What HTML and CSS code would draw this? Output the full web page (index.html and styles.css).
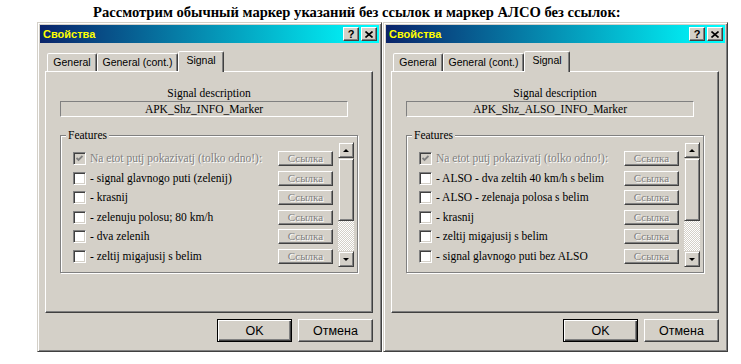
FILE: index.html
```html
<!DOCTYPE html>
<html lang="ru">
<head>
    <meta charset="UTF-8">
    <meta name="viewport" content="width=device-width, initial-scale=1.0">
    <title>Свойства</title>
    <link rel="stylesheet" href="styles.css">
</head>
<body>

<h2 class="heading">Рассмотрим обычный маркер указаний без ссылок и маркер АЛСО без ссылок:</h2>

<div class="dialogs">

    <!-- first dialog: APK_Shz_INFO_Marker -->
    <div class="dialog">
        <div class="titlebar">
            <span class="title">Свойства</span>
            <span class="tbtn help">?</span>
            <span class="tbtn close"><svg width="8" height="7" viewBox="0 0 8 7"><path d="M0.5 0.5l7 6M7.5 0.5l-7 6" stroke="#000" stroke-width="1.6"/></svg></span>
        </div>
        <div class="body">
            <div class="tabs">
                <div class="tab tab-general">General</div>
                <div class="tab tab-cont">General (cont.)</div>
                <div class="tab tab-signal active">Signal</div>
            </div>
            <div class="panel">
                <div class="desc-label">Signal description</div>
                <div class="desc">APK_Shz_INFO_Marker</div>
                <div class="group">
                    <div class="group-title">Features</div>
                    <div class="group-body">
                        <div class="rows">
                            <div class="row disabled">
                                <span class="check checked"><svg width="7" height="7" viewBox="0 0 7 7"><path d="M0.5 3l2 2 4-4" stroke="#808080" stroke-width="1.8" fill="none"/></svg></span>
                                <span class="label">Na etot putj pokazivatj (tolko odno!):</span>
                                <span class="link">Ссылка</span>
                            </div>
                            <div class="row">
                                <span class="check"></span>
                                <span class="label">- signal glavnogo puti (zelenij)</span>
                                <span class="link">Ссылка</span>
                            </div>
                            <div class="row">
                                <span class="check"></span>
                                <span class="label">- krasnij</span>
                                <span class="link">Ссылка</span>
                            </div>
                            <div class="row">
                                <span class="check"></span>
                                <span class="label">- zelenuju polosu; 80 km/h</span>
                                <span class="link">Ссылка</span>
                            </div>
                            <div class="row">
                                <span class="check"></span>
                                <span class="label">- dva zelenih</span>
                                <span class="link">Ссылка</span>
                            </div>
                            <div class="row">
                                <span class="check"></span>
                                <span class="label">- zeltij migajusij s belim</span>
                                <span class="link">Ссылка</span>
                            </div>
                        </div>
                        <div class="scrollbar">
                            <div class="sb-btn up"></div>
                            <div class="sb-thumb"></div>
                            <div class="sb-track"></div>
                            <div class="sb-btn down"></div>
                        </div>
                    </div>
                </div>
            </div>
            <div class="actions">
                <button class="btn default">OK</button>
                <button class="btn">Отмена</button>
            </div>
        </div>
    </div>

    <!-- second dialog: APK_Shz_ALSO_INFO_Marker -->
    <div class="dialog">
        <div class="titlebar">
            <span class="title">Свойства</span>
            <span class="tbtn help">?</span>
            <span class="tbtn close"><svg width="8" height="7" viewBox="0 0 8 7"><path d="M0.5 0.5l7 6M7.5 0.5l-7 6" stroke="#000" stroke-width="1.6"/></svg></span>
        </div>
        <div class="body">
            <div class="tabs">
                <div class="tab tab-general">General</div>
                <div class="tab tab-cont">General (cont.)</div>
                <div class="tab tab-signal active">Signal</div>
            </div>
            <div class="panel">
                <div class="desc-label">Signal description</div>
                <div class="desc">APK_Shz_ALSO_INFO_Marker</div>
                <div class="group">
                    <div class="group-title">Features</div>
                    <div class="group-body">
                        <div class="rows">
                            <div class="row disabled">
                                <span class="check checked"><svg width="7" height="7" viewBox="0 0 7 7"><path d="M0.5 3l2 2 4-4" stroke="#808080" stroke-width="1.8" fill="none"/></svg></span>
                                <span class="label">Na etot putj pokazivatj (tolko odno!):</span>
                                <span class="link">Ссылка</span>
                            </div>
                            <div class="row">
                                <span class="check"></span>
                                <span class="label">- ALSO - dva zeltih 40 km/h s belim</span>
                                <span class="link">Ссылка</span>
                            </div>
                            <div class="row">
                                <span class="check"></span>
                                <span class="label">- ALSO - zelenaja polosa s belim</span>
                                <span class="link">Ссылка</span>
                            </div>
                            <div class="row">
                                <span class="check"></span>
                                <span class="label">- krasnij</span>
                                <span class="link">Ссылка</span>
                            </div>
                            <div class="row">
                                <span class="check"></span>
                                <span class="label">- zeltij migajusij s belim</span>
                                <span class="link">Ссылка</span>
                            </div>
                            <div class="row">
                                <span class="check"></span>
                                <span class="label">- signal glavnogo puti bez ALSO</span>
                                <span class="link">Ссылка</span>
                            </div>
                        </div>
                        <div class="scrollbar">
                            <div class="sb-btn up"></div>
                            <div class="sb-thumb"></div>
                            <div class="sb-track"></div>
                            <div class="sb-btn down"></div>
                        </div>
                    </div>
                </div>
            </div>
            <div class="actions">
                <button class="btn default">OK</button>
                <button class="btn">Отмена</button>
            </div>
        </div>
    </div>

</div>

</body>
</html>
```

FILE: styles.css
```css
body {
    margin: 0;
    padding: 0;
    background: #fff;
    overflow: hidden;
}
.heading {
    margin: 0;
    height: 18px;
    padding: 4px 0 0 93px;
    font: bold 14.6px/17px "Liberation Serif", serif;
    color: #000;
}
.dialogs {
    display: flex;
    gap: 1px;
    padding-left: 37px;
}
.dialog {
    width: 345px;
    height: 330px;
    box-sizing: border-box;
    background: #d4d0c8;
    border: 1px solid;
    border-color: #d4d0c8 #404040 #404040 #d4d0c8;
    box-shadow: inset 1px 1px #fff, inset -1px -1px #808080;
    padding: 2px;
    display: flex;
    flex-direction: column;
}
.titlebar {
    height: 18px;
    display: flex;
    align-items: center;
    padding: 0 2px;
    background: linear-gradient(to right, #0a246a, #00ffff);
}
.title {
    flex: 1;
    color: #ffff00;
    font: bold 11px "Liberation Sans", sans-serif;
    padding-left: 1px;
}
.tbtn {
    width: 16px;
    height: 14px;
    box-sizing: border-box;
    background: #d4d0c8;
    border: 1px solid;
    border-color: #fff #404040 #404040 #fff;
    box-shadow: inset -1px -1px #808080;
    display: flex;
    align-items: center;
    justify-content: center;
    font: bold 11px/12px "Liberation Sans", sans-serif;
    color: #000;
}
.help {
    margin-right: 2px;
}
.body {
    flex: 1;
    padding: 8px 6px 7px 5px;
    display: flex;
    flex-direction: column;
}
.tabs {
    display: flex;
    align-items: flex-end;
    height: 20px;
    padding-left: 2px;
    position: relative;
    z-index: 1;
}
.tab {
    height: 18px;
    box-sizing: border-box;
    border: 1px solid;
    border-bottom: none;
    border-color: #fff #404040 transparent #fff;
    box-shadow: inset -1px 0 #808080;
    border-radius: 2px 2px 0 0;
    background: #d4d0c8;
    font: 10.5px/17px "Liberation Sans", sans-serif;
    text-align: center;
    color: #000;
}
.tab-general {
    width: 50px;
}
.tab-cont {
    width: 81px;
}
.tab-signal {
    width: 46px;
}
.tab.active {
    height: 21px;
    margin-bottom: -1px;
    line-height: 17px;
}
.panel {
    height: 242px;
    box-sizing: border-box;
    border: 1px solid;
    border-color: #fff #404040 #404040 #fff;
    box-shadow: inset -1px -1px #808080;
    display: flex;
    flex-direction: column;
}
.desc-label {
    margin-top: 15px;
    text-align: center;
    font: 11.5px/13px "Liberation Serif", serif;
}
.desc {
    margin: 1px 0 0 14px;
    width: 288px;
    height: 16px;
    box-sizing: border-box;
    border: 1px solid;
    border-color: #808080 #fff #fff #808080;
    text-align: center;
    font: 11.5px/14px "Liberation Serif", serif;
}
.group {
    margin: 18px 0 0 14px;
    width: 298px;
    height: 138px;
    box-sizing: border-box;
    border: 1px solid #808080;
    box-shadow: inset 1px 1px #fff, 1px 1px #fff;
}
.group-title {
    display: table;
    margin: -7px 0 0 5px;
    padding: 0 2px;
    background: #d4d0c8;
    font: 11.5px/13px "Liberation Serif", serif;
}
.group-body {
    display: flex;
    align-items: flex-start;
    padding-right: 3px;
}
.rows {
    flex: 1;
    margin: 7px 5px 0 0;
}
.row {
    height: 19.5px;
    display: flex;
    align-items: center;
    padding-left: 12px;
}
.check {
    width: 13px;
    height: 13px;
    box-sizing: border-box;
    background: #fff;
    border: 1px solid;
    border-color: #808080 #fff #fff #808080;
    box-shadow: inset 1px 1px #404040, inset -1px -1px #d4d0c8;
    margin-right: 4px;
    display: flex;
    align-items: center;
    justify-content: center;
}
.check.checked {
    background: #d4d0c8;
}
.label {
    flex: 1;
    font: 11.5px/13px "Liberation Serif", serif;
    white-space: nowrap;
}
.row.disabled .label {
    color: #808080;
    text-shadow: 1px 1px #fff;
}
.link {
    width: 55px;
    height: 15px;
    box-sizing: border-box;
    border: 1px solid;
    border-color: #fff #404040 #404040 #fff;
    box-shadow: inset -1px -1px #808080;
    font: 11px/13px "Liberation Serif", serif;
    color: #808080;
    text-shadow: 1px 1px #fff;
    text-align: center;
}
.scrollbar {
    width: 16px;
    height: 125px;
    display: flex;
    flex-direction: column;
}
.sb-btn, .sb-thumb {
    box-sizing: border-box;
    background: #d4d0c8;
    border: 1px solid;
    border-color: #d4d0c8 #404040 #404040 #d4d0c8;
    box-shadow: inset 1px 1px #fff, inset -1px -1px #808080;
}
.sb-btn {
    height: 16px;
    display: flex;
    align-items: center;
    justify-content: center;
}
.sb-btn::after {
    content: "";
    border-left: 3px solid transparent;
    border-right: 3px solid transparent;
}
.sb-btn.up::after {
    border-bottom: 3px solid #000;
}
.sb-btn.down::after {
    border-top: 3px solid #000;
}
.sb-thumb {
    height: 63px;
}
.sb-track {
    flex: 1;
    background: repeating-conic-gradient(#fff 0 25%, #d4d0c8 0 50%) 0 0 / 2px 2px;
}
.actions {
    display: flex;
    justify-content: flex-end;
    gap: 6px;
    margin-top: 6px;
}
.btn {
    width: 75px;
    height: 23px;
    padding: 0;
    box-sizing: border-box;
    background: #d4d0c8;
    border: 1px solid;
    border-color: #fff #404040 #404040 #fff;
    box-shadow: inset -1px -1px #808080;
    font: 12.5px "Liberation Sans", sans-serif;
    color: #000;
}
.btn.default {
    border-color: #000;
    box-shadow: inset 1px 1px #fff, inset -1px -1px #404040, inset -2px -2px #808080;
}
```
